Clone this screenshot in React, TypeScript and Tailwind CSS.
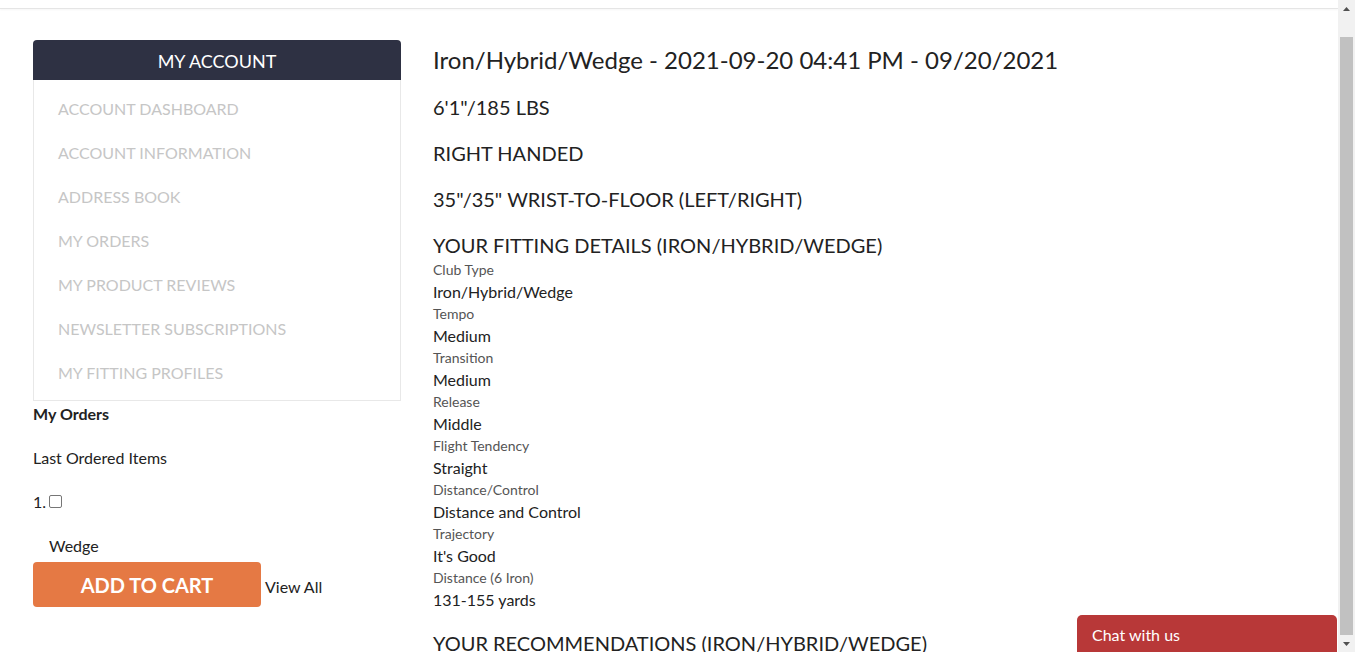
import React from 'react';

const MENU = [
  'Account Dashboard',
  'Account Information',
  'Address Book',
  'My Orders',
  'My Product Reviews',
  'Newsletter Subscriptions',
  'My Fitting Profiles',
];

const DETAILS: [string, string][] = [
  ['Club Type', 'Iron/Hybrid/Wedge'],
  ['Tempo', 'Medium'],
  ['Transition', 'Medium'],
  ['Release', 'Middle'],
  ['Flight Tendency', 'Straight'],
  ['Distance/Control', 'Distance and Control'],
  ['Trajectory', "It's Good"],
  ['Distance (6 Iron)', '131-155 yards'],
];

function Sidebar() {
  return (
    <aside className="w-[368px] shrink-0">
      <div className="h-[40px] pt-[2px] rounded-t-[4px] bg-[#2e3143] flex items-center justify-center text-white text-[18px] uppercase">
        My Account
      </div>
      <ul className="border border-t-0 border-[#e8e8e8] pt-[7px] pb-[5px]">
        {MENU.map((m) => (
          <li key={m} className="h-[44px] flex items-center pl-[24px] text-[16px] uppercase text-[#c6c6c6]">
            {m}
          </li>
        ))}
      </ul>
      <div className="text-[#222] text-[16px]">
        <div className="h-[26px] flex items-center font-bold">My Orders</div>
        <div className="mt-[9px] h-[44px] flex items-center">Last Ordered Items</div>
        <div className="h-[44px] flex items-center gap-[3px]">
          <span>1.</span>
          <span className="-mt-[2px] w-[13px] h-[13px] border border-[#767676] rounded-[2px] bg-white" />
        </div>
        <div className="h-[38px] pt-[12px] leading-[20px] pl-[16px]">Wedge</div>
        <div className="flex items-center">
          <button className="w-[228px] h-[45px] rounded-[4px] bg-[#e57944] text-white text-[20px] font-bold uppercase">
            Add to Cart
          </button>
          <span className="ml-[4px] mt-[5px] text-[#222]">View All</span>
        </div>
      </div>
    </aside>
  );
}

function Content() {
  return (
    <main className="flex-1 text-[#222]">
      <h1 className="text-[24px] leading-[40px] h-[40px]">Iron/Hybrid/Wedge - 2021-09-20 04:41 PM - 09/20/2021</h1>
      <div className="text-[20px] uppercase">
        <p className="mt-[4px] h-[46px] leading-[46px]">6'1"/185 Lbs</p>
        <p className="h-[46px] leading-[46px]">Right Handed</p>
        <p className="h-[46px] leading-[46px]">35"/35" Wrist-to-Floor (Left/Right)</p>
        <p className="h-[46px] leading-[46px]">Your Fitting Details (Iron/Hybrid/Wedge)</p>
      </div>
      <dl className="-mt-[9px]">
        {DETAILS.map(([k, v]) => (
          <div key={k}>
            <dt className="text-[14px] leading-[22px] text-[#555]">{k}</dt>
            <dd className="text-[16px] leading-[22px]">{v}</dd>
          </div>
        ))}
      </dl>
      <p className="mt-[9px] text-[20px] uppercase h-[46px] leading-[46px]">Your Recommendations (Iron/Hybrid/Wedge)</p>
      <div className="h-[300px]" />
    </main>
  );
}

function Scrollbar() {
  return (
    <div className="fixed top-0 right-0 w-[17px] h-full bg-[#f1f1f1] flex flex-col items-center">
      <div className="h-[17px] w-full flex items-center justify-center">
        <svg width="7" height="4" viewBox="0 0 7 4"><path d="M0 4L3.5 0L7 4Z" fill="#505050" /></svg>
      </div>
      <div className="mt-[20px] w-[13px] flex-1 mb-[17px] bg-[#c1c1c1]" />
      <div className="absolute bottom-0 h-[17px] w-full flex items-center justify-center">
        <svg width="7" height="4" viewBox="0 0 7 4"><path d="M0 0L3.5 4L7 0Z" fill="#505050" /></svg>
      </div>
    </div>
  );
}

export default function App() {
  return (
    <div className="min-h-screen bg-white font-['Lato','Open_Sans',sans-serif] pr-[17px]">
      <div className="h-[9px] border-b border-[#e5e5e5] shadow-[0_1px_2px_rgba(0,0,0,0.04)]" />
      <div className="flex gap-[32px] px-[33px] pt-[31px]">
        <Sidebar />
        <Content />
      </div>
      <div className="fixed right-[18px] bottom-0 w-[260px] h-[37px] rounded-t-[5px] bg-[#b83838] text-white text-[16px] pl-[15px] pt-[8px]">
        Chat with us
      </div>
      <Scrollbar />
    </div>
  );
}
